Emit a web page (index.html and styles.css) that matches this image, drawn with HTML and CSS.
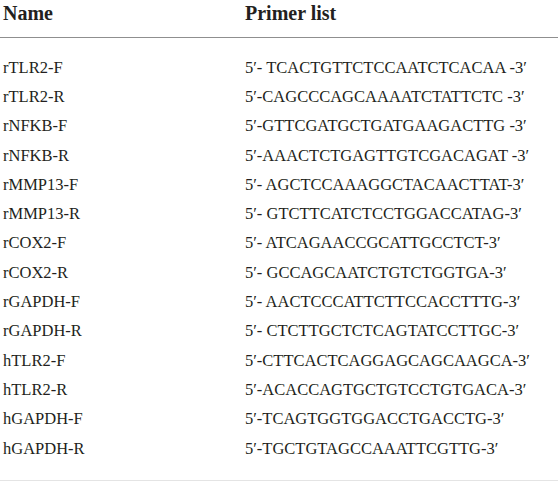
FILE: index.html
```html
<!DOCTYPE html>
<html>
<head>
<meta charset="utf-8">
<link rel="stylesheet" href="styles.css">
</head>
<body>
<table class="primers">
  <thead>
    <tr><th class="c-name">Name</th><th class="c-seq">Primer list</th></tr>
  </thead>
  <tbody>
    <tr><td>rTLR2-F</td><td>5′- TCACTGTTCTCCAATCTCACAA -3′</td></tr>
    <tr><td>rTLR2-R</td><td>5′-CAGCCCAGCAAAATCTATTCTC -3′</td></tr>
    <tr><td>rNFKB-F</td><td>5′-GTTCGATGCTGATGAAGACTTG -3′</td></tr>
    <tr><td>rNFKB-R</td><td>5′-AAACTCTGAGTTGTCGACAGAT -3′</td></tr>
    <tr><td>rMMP13-F</td><td>5′- AGCTCCAAAGGCTACAACTTAT-3′</td></tr>
    <tr><td>rMMP13-R</td><td>5′- GTCTTCATCTCCTGGACCATAG-3′</td></tr>
    <tr><td>rCOX2-F</td><td>5′- ATCAGAACCGCATTGCCTCT-3′</td></tr>
    <tr><td>rCOX2-R</td><td>5′- GCCAGCAATCTGTCTGGTGA-3′</td></tr>
    <tr><td>rGAPDH-F</td><td>5′- AACTCCCATTCTTCCACCTTTG-3′</td></tr>
    <tr><td>rGAPDH-R</td><td>5′- CTCTTGCTCTCAGTATCCTTGC-3′</td></tr>
    <tr><td>hTLR2-F</td><td>5′-CTTCACTCAGGAGCAGCAAGCA-3′</td></tr>
    <tr><td>hTLR2-R</td><td>5′-ACACCAGTGCTGTCCTGTGACA-3′</td></tr>
    <tr><td>hGAPDH-F</td><td>5′-TCAGTGGTGGACCTGACCTG-3′</td></tr>
    <tr><td>hGAPDH-R</td><td>5′-TGCTGTAGCCAAATTCGTTG-3′</td></tr>
  </tbody>
</table>
</body>
</html>
```
FILE: styles.css
```css
html, body {
  margin: 0;
  padding: 0;
  background: #fff;
}
.primers {
  width: 558px;
  border-collapse: collapse;
  font-family: "Liberation Serif", "Times New Roman", serif;
  color: #231f20;
  font-size: 16.5px;
}
.primers th {
  text-align: left;
  font-weight: bold;
  font-size: 20px;
  line-height: 26px;
  height: 26px;
  padding: 0 0 11px 3px;
  vertical-align: top;
  border-bottom: 1px solid #8f8f8f;
}
.primers .c-name { width: 239px; }
.primers td {
  height: 29.3px;
  line-height: 20px;
  padding: 0 0 0 3px;
  vertical-align: middle;
}
.primers tbody tr:first-child td { padding-top: 15px; }
.primers tbody tr:last-child td { padding-bottom: 17px; border-bottom: 1px solid #e4e4e4; }
```
